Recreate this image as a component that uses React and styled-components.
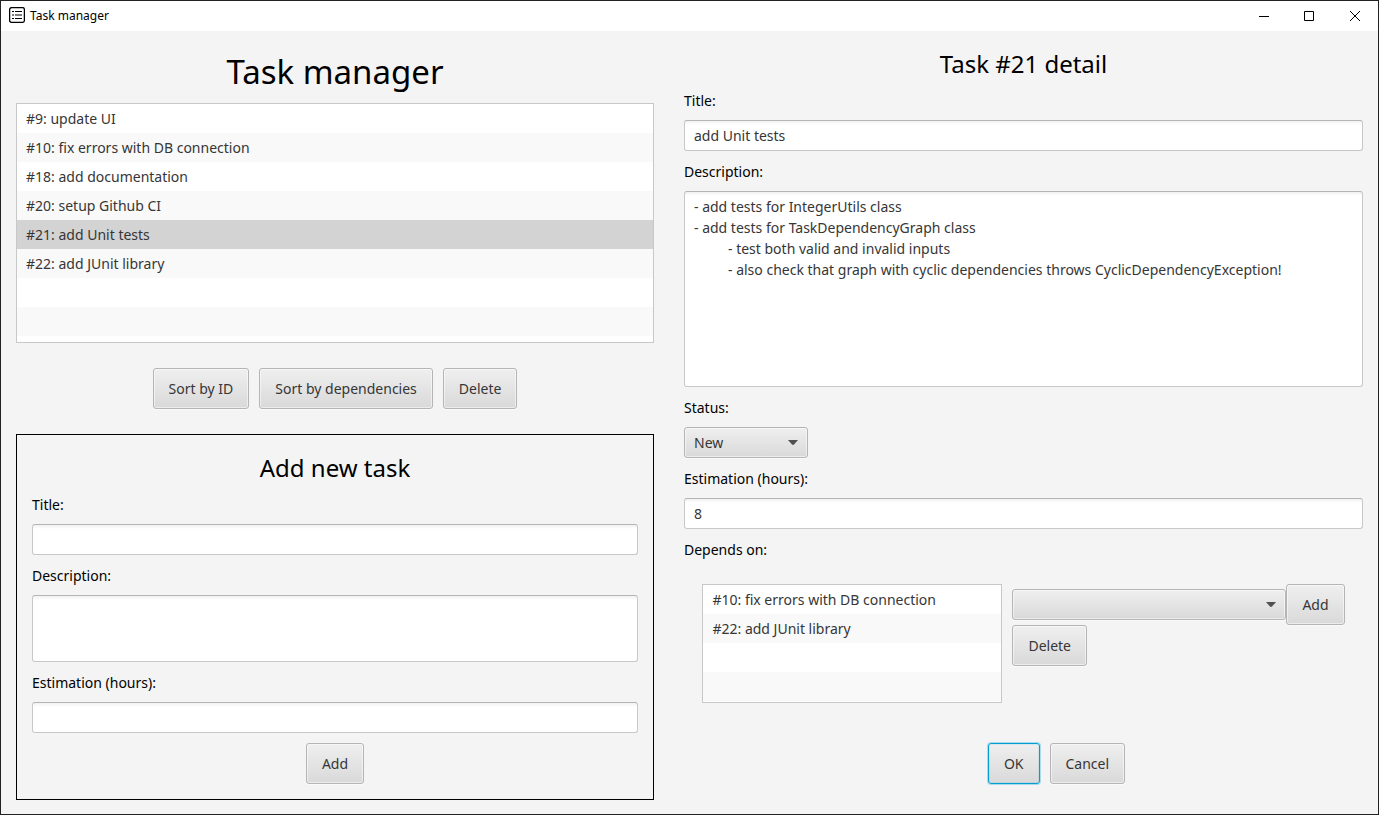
import React, { useState } from "react";
import styled, { createGlobalStyle, css } from "styled-components";

const GlobalStyle = createGlobalStyle`
  * { box-sizing: border-box; }
  body {
    margin: 0;
    background: #f4f4f4;
    color: #000;
    font-family: "Noto Sans", "Open Sans", sans-serif;
    font-size: 14px;
    line-height: 20px;
  }
  button, input, textarea, select { font: inherit; color: #363636; }
`;

const Window = styled.div`
  display: flex;
  flex-direction: column;
  min-height: 100vh;
  border: 1px solid #222;
`;

const TitleBar = styled.header`
  display: flex;
  align-items: center;
  height: 30px;
  padding-left: 8px;
  background: #fff;
  font-size: 12px;
`;

const WindowTitle = styled.span`
  flex: 1;
  margin-left: 5px;
`;

const WindowButton = styled.button`
  display: grid;
  place-items: center;
  width: 46px;
  height: 28px;
  padding: 0;
  border: 0;
  background: none;
`;

const Columns = styled.main`
  flex: 1;
  display: grid;
  grid-template-columns: minmax(0, 638fr) minmax(0, 679fr);
  gap: 30px;
  padding: 15px 15px 14px;
`;

const Column = styled.section`
  display: flex;
  flex-direction: column;
`;

const PageHeading = styled.h1`
  margin: 0 0 5px;
  font-size: 33px;
  font-weight: 400;
  line-height: 52px;
  text-align: center;
`;

const Heading = styled.h2`
  margin: 0;
  padding-top: 2px;
  font-size: 24px;
  font-weight: 400;
  line-height: 32px;
  text-align: center;
`;

const Label = styled.label`
  padding-top: 2px;
  line-height: 18px;
`;

const Form = styled.form`
  display: flex;
  flex-direction: column;
  gap: 10px;
`;

const NewTaskForm = styled(Form)`
  padding: 15px;
  border: 1px solid #000;
`;

const List = styled.ul`
  height: ${(p) => p.$height}px;
  margin: 0;
  padding: 0;
  overflow: hidden;
  list-style: none;
  border: 1px solid #c8c8c8;
  background: repeating-linear-gradient(#fff 0 29px, #f9f9f9 29px 58px);
`;

const ListItem = styled.li`
  height: 29px;
  padding: 0 9px;
  color: #363636;
  line-height: 29px;
  cursor: default;
  ${(p) => p.$selected && css`background: #d3d3d3;`}
`;

const ButtonRow = styled.div`
  display: flex;
  justify-content: center;
  gap: 10px;
  margin: ${(p) => p.$margin || "0"};
  padding-left: ${(p) => (p.$shifted ? "66px" : "0")};
`;

const raised = css`
  border: 1px solid #b5b5b5;
  border-radius: 3px;
  background: linear-gradient(#efefef, #d9d9d9);
  box-shadow: inset 0 0 0 1px #ffffff80, 0 1px 0 #fafafa;
`;

const Button = styled.button`
  height: 41px;
  padding: 0 15px;
  white-space: nowrap;
  ${raised}
  ${(p) => p.$focused && css`
    border-color: #039ed3;
    box-shadow: 0 0 0 1px #039ed34d, inset 0 0 0 1px #039ed31a;
  `}
`;

const field = css`
  display: block;
  width: 100%;
  border: 1px solid #c8c8c8;
  border-top-color: #b5b5b5;
  border-radius: 3px;
  background: linear-gradient(#f1f1f1, #fff 4px);
  outline: none;
`;

const TextField = styled.input`
  ${field}
  height: 31px;
  padding: 0 9px;
`;

const TextArea = styled.textarea`
  ${field}
  height: ${(p) => p.$height}px;
  padding: 4px 9px;
  line-height: 21px;
  tab-size: 34px;
  resize: none;
`;

const SelectBox = styled.div`
  display: grid;
  align-items: center;
  width: ${(p) => p.$width}px;

  > * { grid-area: 1 / 1; }
  > svg { justify-self: end; margin-right: 10px; pointer-events: none; }
`;

const SelectField = styled.select`
  width: 100%;
  height: 31px;
  padding: 0 24px 0 9px;
  appearance: none;
  ${raised}
`;

const Dependencies = styled.div`
  display: flex;
  justify-content: center;
  gap: 10px;
  padding: 15px 0 30px;

  > ul { width: 300px; }
`;

const AddDependency = styled.div`
  display: flex;
  align-items: center;
`;

const AppIconSvg = styled.svg`
  margin-bottom: 2px;
`;

const tasks = [
  { id: 9, title: "update UI" },
  { id: 10, title: "fix errors with DB connection" },
  { id: 18, title: "add documentation" },
  { id: 20, title: "setup Github CI" },
  { id: 21, title: "add Unit tests" },
  { id: 22, title: "add JUnit library" },
];

const dependencies = tasks.filter((t) => t.id === 10 || t.id === 22);

const description = [
  "- add tests for IntegerUtils class",
  "- add tests for TaskDependencyGraph class",
  "\t- test both valid and invalid inputs",
  "\t- also check that graph with cyclic dependencies throws CyclicDependencyException!",
].join("\n");

function AppIcon() {
  return (
    <AppIconSvg width="16" height="16" viewBox="0 0 16 16" fill="none" stroke="#000">
      <rect x="0.6" y="0.6" width="14.8" height="14.8" rx="2" strokeWidth="1.3" />
      <path d="M3 4.5h2M3 8h2M3 11.5h2M6 4.5h7M6 8h7M6 11.5h7" strokeWidth="1.2" />
    </AppIconSvg>
  );
}

function Select({ width, children, ...rest }) {
  return (
    <SelectBox $width={width}>
      <SelectField {...rest}>{children}</SelectField>
      <svg width="10" height="5" viewBox="0 0 10 5" fill="#505050">
        <path d="M0 0h10L6 4.5Q5 5.3 4 4.5Z" />
      </svg>
    </SelectBox>
  );
}

function TaskList({ items, height, selected, onSelect, label }) {
  return (
    <List $height={height} aria-label={label}>
      {items.map((t) => (
        <ListItem key={t.id} $selected={t.id === selected} onClick={() => onSelect?.(t.id)}>
          #{t.id}: {t.title}
        </ListItem>
      ))}
    </List>
  );
}

export default function App() {
  const [selected, setSelected] = useState(21);
  return (
    <>
      <GlobalStyle />
      <Window>
        <TitleBar>
          <AppIcon />
          <WindowTitle>Task manager</WindowTitle>
          <WindowButton type="button" aria-label="Minimize">
            <svg width="12" height="10" stroke="#000"><path d="M2 5.5h10" /></svg>
          </WindowButton>
          <WindowButton type="button" aria-label="Maximize">
            <svg width="10" height="10" fill="none" stroke="#000"><path d="M.5.5h9v9h-9z" /></svg>
          </WindowButton>
          <WindowButton type="button" aria-label="Close">
            <svg width="10" height="10" stroke="#000"><path d="M0 0l10 10M10 0L0 10" /></svg>
          </WindowButton>
        </TitleBar>
        <Columns>
          <Column>
            <PageHeading>Task manager</PageHeading>
            <TaskList items={tasks} height={240} selected={selected} onSelect={setSelected} label="Tasks" />
            <ButtonRow $margin="25px 0">
              <Button type="button">Sort by ID</Button>
              <Button type="button">Sort by dependencies</Button>
              <Button type="button">Delete</Button>
            </ButtonRow>
            <NewTaskForm onSubmit={(e) => e.preventDefault()}>
              <Heading>Add new task</Heading>
              <Label htmlFor="new-title">Title:</Label>
              <TextField id="new-title" />
              <Label htmlFor="new-description">Description:</Label>
              <TextArea id="new-description" $height={67} />
              <Label htmlFor="new-estimation">Estimation (hours):</Label>
              <TextField id="new-estimation" />
              <ButtonRow>
                <Button>Add</Button>
              </ButtonRow>
            </NewTaskForm>
          </Column>
          <Column>
            <Form onSubmit={(e) => e.preventDefault()}>
              <Heading>Task #21 detail</Heading>
              <Label htmlFor="title">Title:</Label>
              <TextField id="title" defaultValue="add Unit tests" />
              <Label htmlFor="description">Description:</Label>
              <TextArea id="description" $height={196} defaultValue={description} />
              <Label htmlFor="status">Status:</Label>
              <Select id="status" width={124}>
                <option>New</option>
              </Select>
              <Label htmlFor="estimation">Estimation (hours):</Label>
              <TextField id="estimation" defaultValue="8" />
              <Label htmlFor="dependency">Depends on:</Label>
              <Dependencies>
                <TaskList items={dependencies} height={119} label="Dependencies" />
                <div>
                  <AddDependency>
                    <Select id="dependency" width={274}>
                      <option></option>
                    </Select>
                    <Button type="button">Add</Button>
                  </AddDependency>
                  <Button type="button">Delete</Button>
                </div>
              </Dependencies>
              <ButtonRow $shifted>
                <Button $focused>OK</Button>
                <Button type="button">Cancel</Button>
              </ButtonRow>
            </Form>
          </Column>
        </Columns>
      </Window>
    </>
  );
}
